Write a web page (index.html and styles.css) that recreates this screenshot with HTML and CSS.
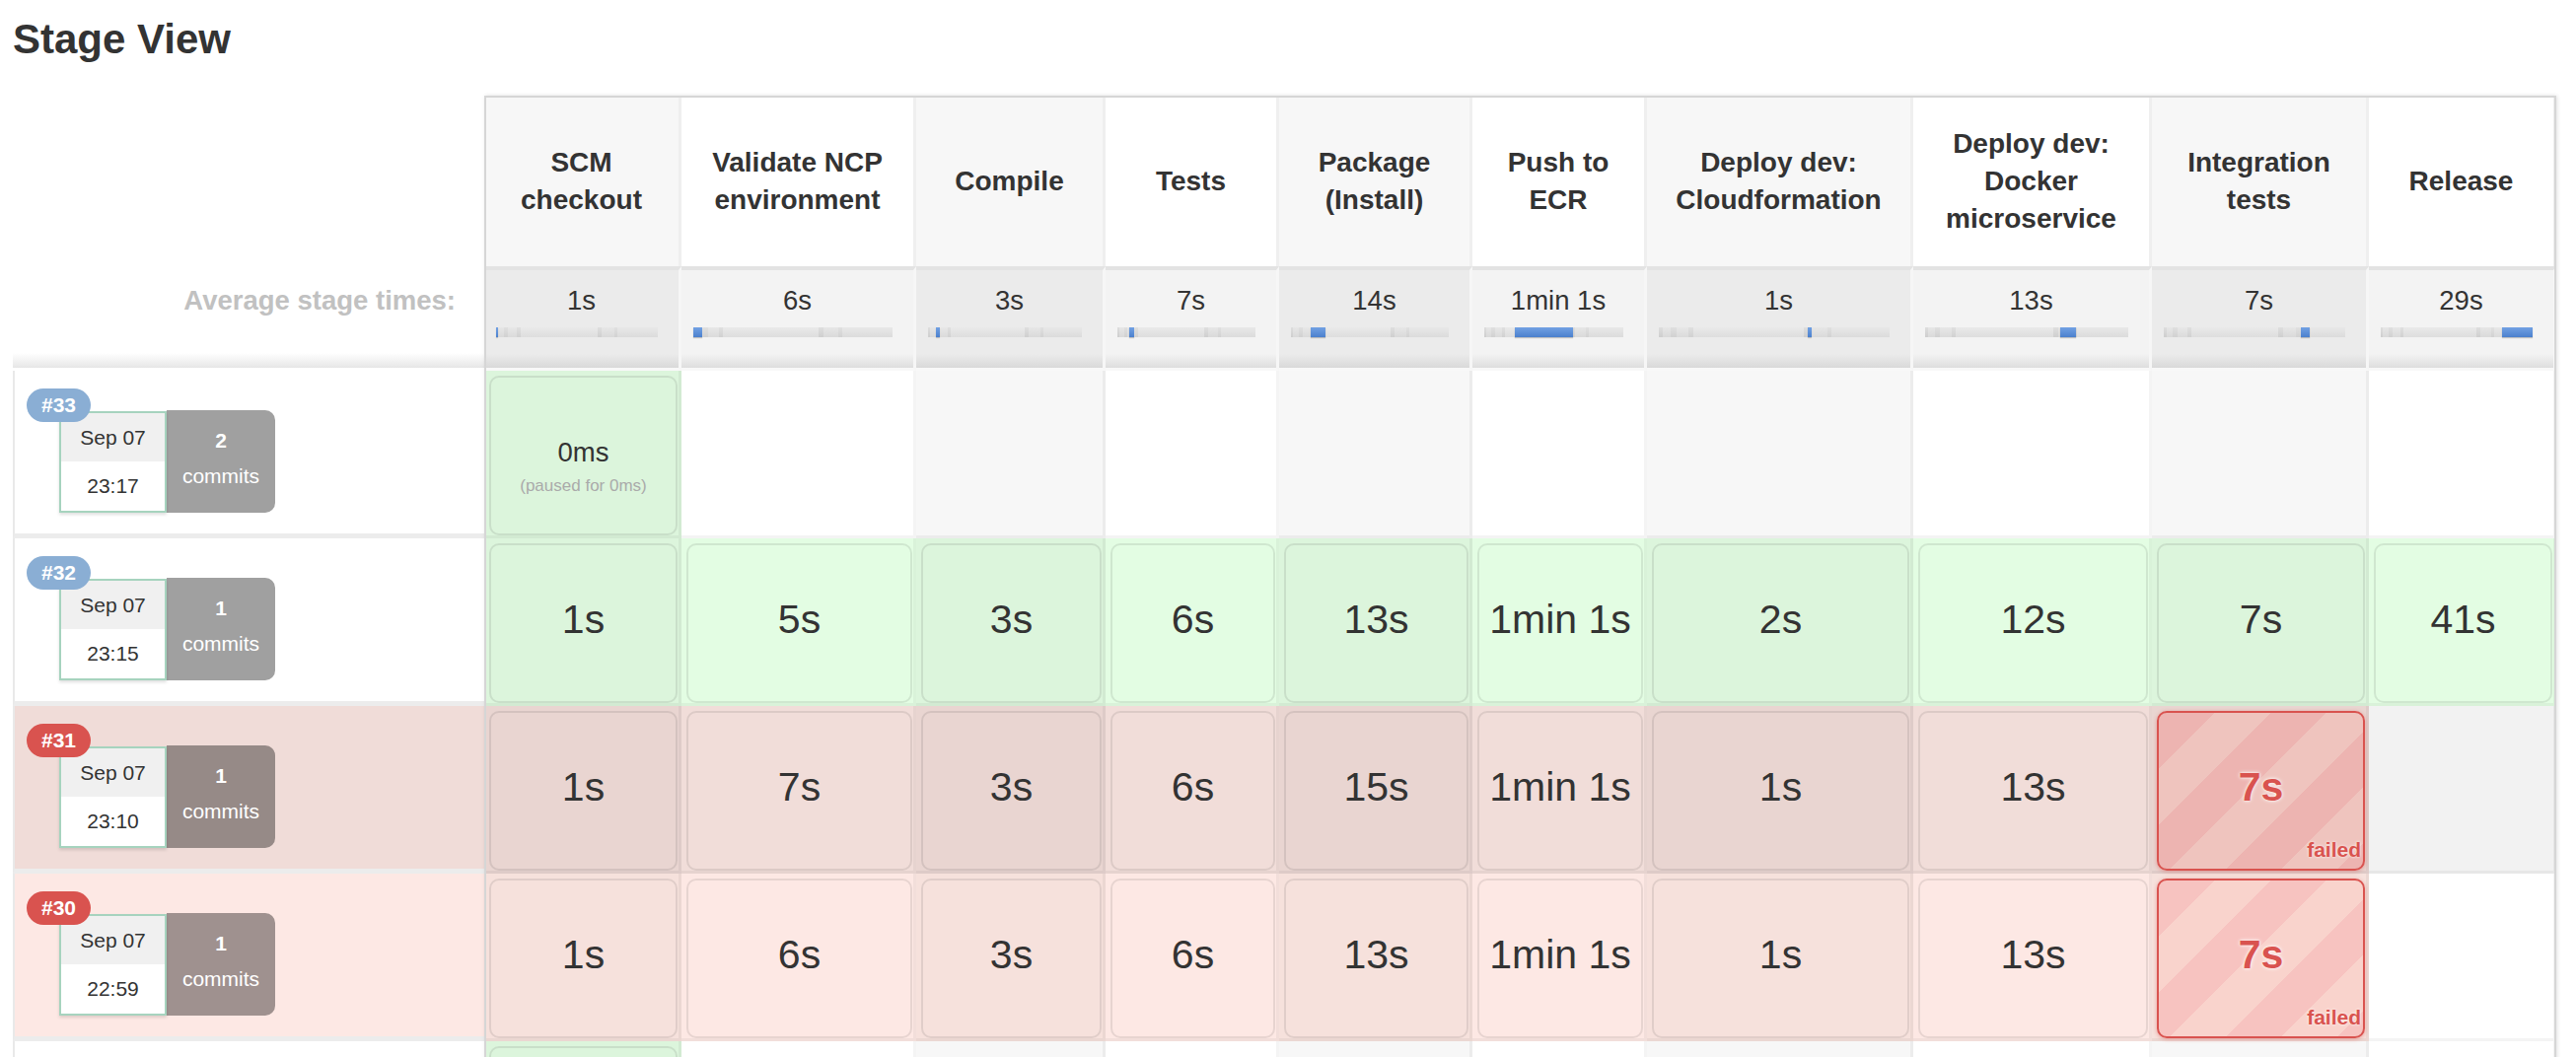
FILE: index.html
```html
<!DOCTYPE html>
<html lang="en">
<head>
<meta charset="utf-8">
<title>Stage View</title>
<link rel="stylesheet" href="styles.css">
</head>
<body>
<h2 class="title">Stage View</h2>
<div class="grid">
  <div class="frame"></div>

  <!-- header row -->
  <div class="corner"></div>
  <div class="hd odd">SCM checkout</div>
  <div class="hd even">Validate NCP environment</div>
  <div class="hd odd">Compile</div>
  <div class="hd even">Tests</div>
  <div class="hd odd">Package (Install)</div>
  <div class="hd even">Push to ECR</div>
  <div class="hd odd">Deploy dev: Cloudformation</div>
  <div class="hd even">Deploy dev: Docker microservice</div>
  <div class="hd odd">Integration tests</div>
  <div class="hd even">Release</div>

  <!-- average row -->
  <div class="avg-label">Average stage times:</div>
  <div class="avg odd"><div class="avg-val">1s</div><div class="bar"><i class="seg" style="left:0%;width:1.2%"></i></div></div>
  <div class="avg even"><div class="avg-val">6s</div><div class="bar"><i class="seg" style="left:0%;width:4.4%"></i></div></div>
  <div class="avg odd"><div class="avg-val">3s</div><div class="bar"><i class="seg" style="left:5%;width:2.5%"></i></div></div>
  <div class="avg even"><div class="avg-val">7s</div><div class="bar"><i class="seg" style="left:8.3%;width:4.2%"></i></div></div>
  <div class="avg odd"><div class="avg-val">14s</div><div class="bar"><i class="seg" style="left:12.3%;width:9.8%"></i></div></div>
  <div class="avg even"><div class="avg-val">1min 1s</div><div class="bar"><i class="seg" style="left:22%;width:41.7%"></i></div></div>
  <div class="avg odd"><div class="avg-val">1s</div><div class="bar"><i class="seg" style="left:64.7%;width:1.7%"></i></div></div>
  <div class="avg even"><div class="avg-val">13s</div><div class="bar"><i class="seg" style="left:66.3%;width:8.2%"></i></div></div>
  <div class="avg odd"><div class="avg-val">7s</div><div class="bar"><i class="seg" style="left:75.3%;width:5.4%"></i></div></div>
  <div class="avg even"><div class="avg-val">29s</div><div class="bar"><i class="seg" style="left:79.7%;width:20.3%"></i></div></div>

  <!-- build #33 -->
  <div class="build">
    <div class="bi">
      <div class="date"><span class="badge">#33</span><div class="d">Sep 07</div><div class="t">23:17</div></div>
      <div class="commits"><b>2</b><span>commits</span></div>
    </div>
  </div>
  <div class="c odd ok"><div class="box paused-box"><div class="dur-sm">0ms</div><div class="paused">(paused for 0ms)</div></div></div>
  <div class="c even"></div>
  <div class="c odd"></div>
  <div class="c even"></div>
  <div class="c odd"></div>
  <div class="c even"></div>
  <div class="c odd"></div>
  <div class="c even"></div>
  <div class="c odd"></div>
  <div class="c even"></div>

  <!-- build #32 -->
  <div class="build">
    <div class="bi">
      <div class="date"><span class="badge">#32</span><div class="d">Sep 07</div><div class="t">23:15</div></div>
      <div class="commits"><b>1</b><span>commits</span></div>
    </div>
  </div>
  <div class="c odd ok"><div class="box"><div class="dur">1s</div></div></div>
  <div class="c even ok"><div class="box"><div class="dur">5s</div></div></div>
  <div class="c odd ok"><div class="box"><div class="dur">3s</div></div></div>
  <div class="c even ok"><div class="box"><div class="dur">6s</div></div></div>
  <div class="c odd ok"><div class="box"><div class="dur">13s</div></div></div>
  <div class="c even ok"><div class="box"><div class="dur">1min 1s</div></div></div>
  <div class="c odd ok"><div class="box"><div class="dur">2s</div></div></div>
  <div class="c even ok"><div class="box"><div class="dur">12s</div></div></div>
  <div class="c odd ok"><div class="box"><div class="dur">7s</div></div></div>
  <div class="c even ok"><div class="box"><div class="dur">41s</div></div></div>

  <!-- build #31 (hovered, failed) -->
  <div class="build fail hov">
    <div class="bi">
      <div class="date"><span class="badge red">#31</span><div class="d">Sep 07</div><div class="t">23:10</div></div>
      <div class="commits"><b>1</b><span>commits</span></div>
    </div>
  </div>
  <div class="c odd fr hov"><div class="box"><div class="dur">1s</div></div></div>
  <div class="c even fr hov"><div class="box"><div class="dur">7s</div></div></div>
  <div class="c odd fr hov"><div class="box"><div class="dur">3s</div></div></div>
  <div class="c even fr hov"><div class="box"><div class="dur">6s</div></div></div>
  <div class="c odd fr hov"><div class="box"><div class="dur">15s</div></div></div>
  <div class="c even fr hov"><div class="box"><div class="dur">1min 1s</div></div></div>
  <div class="c odd fr hov"><div class="box"><div class="dur">1s</div></div></div>
  <div class="c even fr hov"><div class="box"><div class="dur">13s</div></div></div>
  <div class="c odd fr hov"><div class="box failed dark"><div class="dur">7s</div><span class="failed-label">failed</span></div></div>
  <div class="c even hov"></div>

  <!-- build #30 (failed) -->
  <div class="build fail">
    <div class="bi">
      <div class="date"><span class="badge red">#30</span><div class="d">Sep 07</div><div class="t">22:59</div></div>
      <div class="commits"><b>1</b><span>commits</span></div>
    </div>
  </div>
  <div class="c odd fr"><div class="box"><div class="dur">1s</div></div></div>
  <div class="c even fr"><div class="box"><div class="dur">6s</div></div></div>
  <div class="c odd fr"><div class="box"><div class="dur">3s</div></div></div>
  <div class="c even fr"><div class="box"><div class="dur">6s</div></div></div>
  <div class="c odd fr"><div class="box"><div class="dur">13s</div></div></div>
  <div class="c even fr"><div class="box"><div class="dur">1min 1s</div></div></div>
  <div class="c odd fr"><div class="box"><div class="dur">1s</div></div></div>
  <div class="c even fr"><div class="box"><div class="dur">13s</div></div></div>
  <div class="c odd fr"><div class="box failed"><div class="dur">7s</div><span class="failed-label">failed</span></div></div>
  <div class="c even"></div>

  <!-- next build row (only its top edge is in view) -->
  <div class="build"></div>
  <div class="c odd ok"><div class="box"></div></div>
  <div class="c even"></div>
  <div class="c odd"></div>
  <div class="c even"></div>
  <div class="c odd"></div>
  <div class="c even"></div>
  <div class="c odd"></div>
  <div class="c even"></div>
  <div class="c odd"></div>
  <div class="c even"></div>
</div>
</body>
</html>
```

FILE: styles.css
```css
html, body {
  margin: 0;
  padding: 0;
  overflow: hidden;
  background: #fff;
}

body {
  font-family: "Liberation Sans", Arial, Helvetica, sans-serif;
  color: #333;
  padding: 0 13px;
}

.title {
  font-size: 42px;
  font-weight: bold;
  line-height: 48px;
  margin: 16px 0 33px 0;
  color: #333;
}

.grid {
  position: relative;
  display: grid;
  grid-template-columns: 478px 200px 238px 192px 176px 196px 177px 270px 242px 220px 190px;
  grid-template-rows: 173px 106px repeat(5, 170px);
}

.frame {
  position: absolute;
  grid-column: 2 / -1;
  grid-row: 1 / -1;
  top: 0;
  left: 0;
  right: 0;
  bottom: 0;
  border: 2px solid #d6d6d6;
  border-bottom: none;
  box-shadow: 1px 0 4px rgba(0, 0, 0, 0.12);
  pointer-events: none;
  z-index: 5;
}

/* header */
.hd {
  display: flex;
  align-items: center;
  justify-content: center;
  text-align: center;
  padding: 0 10px;
  font-weight: bold;
  font-size: 28px;
  line-height: 38px;
  border-right: 3px solid #efefef;
}
.hd.odd { background: #f7f7f7; }
.hd.even { background: #fff; }

/* average row */
.avg-label {
  text-align: right;
  padding: 19.5px 29px 0 0;
  font-weight: bold;
  font-size: 27.5px;
  line-height: 30px;
  color: #c1c1c1;
  background: linear-gradient(to bottom, #fff calc(100% - 18px), #e6e6e6 calc(100% - 3px), #fff calc(100% - 3px));
}

.avg {
  border-top: 4px solid #e3e3e3;
  border-right: 3px solid #f6f6f6;
  border-bottom: 3px solid #f8f8f8;
  padding-top: 15.5px;
  text-align: center;
  font-size: 27.5px;
  line-height: 30px;
}
.avg.odd { background: linear-gradient(to bottom, #ebebeb calc(100% - 14px), #d9d9d9); }
.avg.even { background: linear-gradient(to bottom, #f3f3f3 calc(100% - 14px), #dedede); }

.bar {
  position: relative;
  height: 10px;
  margin: 12.5px 21px 0 12px;
  background:
    linear-gradient(to bottom, rgba(255, 255, 255, 0.25), rgba(0, 0, 0, 0.02)),
    linear-gradient(to right,
      #d2d2d2 0, #d2d2d2 1.5%,
      #dedede 1.5%, #dedede 5%,
      #d5d5d5 5%, #d5d5d5 7.5%,
      #dfdfdf 7.5%, #dfdfdf 13%,
      #d5d5d5 13%, #d5d5d5 15%,
      #e2e2e2 15%, #e2e2e2 63%,
      #d3d3d3 63%, #d3d3d3 65.5%,
      #dedede 65.5%, #dedede 73%,
      #d6d6d6 73%, #d6d6d6 75%,
      #e0e0e0 75%, #e0e0e0 100%);
}

.seg {
  position: absolute;
  top: 0;
  height: 10px;
  min-width: 2px;
  background: linear-gradient(to bottom, #72a1e3, #4b80cd);
  box-shadow: 0 1px 1px rgba(0, 0, 0, 0.2);
}

/* build info column */
.build {
  position: relative;
  border-left: 2px solid #e9e9e9;
  border-bottom: 5px solid #ececec;
  padding: 41px 0 0 45px;
  background: #fff;
}
.build.fail { background: #fde8e4; }
.build.fail.hov { background: #f0dcd8; }

.bi {
  display: flex;
  align-items: flex-start;
}

.date {
  position: relative;
  width: 109px;
  height: 103px;
  box-sizing: border-box;
  border: 2px solid #a6d3be;
  background: #fff;
  box-shadow: 0 2px 3px rgba(0, 0, 0, 0.13);
  display: flex;
  flex-direction: column;
  font-size: 21px;
  color: #333;
}
.date .d {
  height: 49px;
  background: #f0f0f0;
  display: flex;
  align-items: center;
  justify-content: center;
}
.date .t {
  flex: 1;
  display: flex;
  align-items: center;
  justify-content: center;
}

.badge {
  position: absolute;
  left: -35px;
  top: -25px;
  width: 65px;
  height: 34px;
  border-radius: 17px;
  background: #8aaed4;
  color: #fff;
  font-weight: bold;
  font-size: 21px;
  line-height: 34px;
  text-align: center;
  z-index: 1;
}
.badge.red { background: #d9534f; }

.commits {
  width: 110px;
  height: 104px;
  margin-top: -1px;
  background: rgba(0, 0, 0, 0.373);
  border-radius: 0 10px 10px 0;
  color: #fff;
  font-size: 21px;
  line-height: 36px;
  display: flex;
  flex-direction: column;
  align-items: center;
  justify-content: center;
}
.commits span { margin-bottom: 6px; }

/* stage cells */
.c {
  padding: 5px 1px 0 5px;
  border-right: 3px solid rgba(0, 0, 0, 0.045);
  border-bottom: 3px solid rgba(0, 0, 0, 0.045);
}
.c.odd { background: #f7f7f7; }
.c.even { background: #fff; }
.c.odd.hov { background: #ebebeb; }
.c.even.hov { background: #f2f2f2; }
.c.odd.ok { background: #dcf5dc; }
.c.even.ok { background: #e3fde3; }
.c.odd.fr { background: #f6e1dc; }
.c.even.fr { background: #fde8e4; }
.c.odd.fr.hov { background: #e9d5d1; }
.c.even.fr.hov { background: #f1ddd9; }

.box {
  position: relative;
  height: 162px;
  box-sizing: border-box;
  border: 2px solid rgba(0, 0, 0, 0.085);
  border-radius: 10px;
  display: flex;
  flex-direction: column;
  align-items: center;
  justify-content: center;
  color: #333;
}

.dur {
  font-size: 41px;
  line-height: 46px;
  margin-bottom: 8px;
  white-space: nowrap;
}

.paused-box { padding-top: 21px; }
.dur-sm {
  font-size: 27.5px;
  line-height: 32px;
}
.paused {
  font-size: 17px;
  line-height: 20px;
  margin-top: 8px;
  color: #aaa;
}

.box.failed {
  border-color: #d9534f;
  box-shadow: 0 1px 4px rgba(217, 83, 79, 0.45);
  background: repeating-linear-gradient(135deg, #f7c3c0 0, #f7c3c0 40px, #f9d3cc 40px, #f9d3cc 80px);
}
.box.failed.dark {
  background: repeating-linear-gradient(135deg, #edb4b1 0, #edb4b1 40px, #efc4be 40px, #efc4be 80px);
}
.box.failed .dur {
  color: #d9534f;
  font-weight: bold;
  text-shadow: 0 0 4px #fff, 0 0 2px rgba(255, 255, 255, 0.8);
}
.failed-label {
  position: absolute;
  right: 2px;
  bottom: 9px;
  font-size: 21px;
  line-height: 21px;
  font-weight: bold;
  color: #d9534f;
  text-shadow: 0 0 3px #fff;
}
```
